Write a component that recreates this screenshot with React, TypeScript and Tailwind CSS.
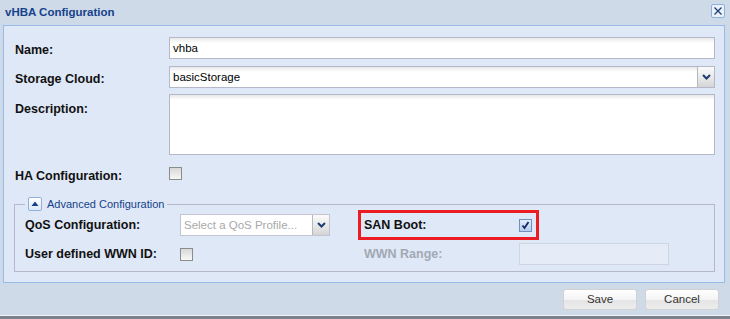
import React from 'react';

function Chevron() {
  return (
    <svg width="9" height="6" viewBox="0 0 9 6">
      <path d="M1 1 L4.5 4.5 L8 1" fill="none" stroke="#1d3d73" strokeWidth="2" />
    </svg>
  );
}

function Trigger() {
  return (
    <div className="w-[17px] h-full border-l border-[#b5b8c8] bg-[linear-gradient(#fbfbfb,#e6e6e6_60%,#d4d4d4)] flex items-center justify-center">
      <Chevron />
    </div>
  );
}

function Check({ checked }: { checked?: boolean }) {
  if (checked) {
    return (
      <span className="w-[13px] h-[13px] border border-[#6f8fbf] bg-[linear-gradient(#e3edfb,#b7cdec)] flex items-center justify-center">
        <svg width="9" height="9" viewBox="0 0 9 9">
          <path d="M1.5 4.5 L3.5 7 L7.5 1" fill="none" stroke="#12296b" strokeWidth="1.8" />
        </svg>
      </span>
    );
  }
  return <span className="w-[13px] h-[13px] border border-[#8c8c8c] bg-[linear-gradient(#d8d8d8,#f7f7f7)]" />;
}

const label = "text-[12.5px] font-bold text-[#111] leading-[16px]";

export default function App() {
  return (
    <div className="w-[730px] h-[319px] bg-[#cedae7] flex flex-col overflow-hidden font-['Liberation_Sans',Arial,sans-serif]">
      {/* header */}
      <div className="h-[25px] shrink-0 flex items-start justify-between pl-[5px] pr-[5px]">
        <span className="mt-[6px] text-[11.5px] font-bold text-[#15428b] leading-[13px]">vHBA Configuration</span>
        <button className="mt-[4px] w-[14px] h-[14px] border border-[#8fb0dd] rounded-[2px] bg-[#eaf1fb] flex items-center justify-center">
          <svg width="10" height="10" viewBox="0 0 10 10">
            <path d="M1.5 1.5 L8.5 8.5 M8.5 1.5 L1.5 8.5" stroke="#1d3d73" strokeWidth="1.3" />
          </svg>
        </button>
      </div>

      {/* body */}
      <div className="ml-[3px] w-[722px] h-[258px] shrink-0 border border-[#99bbe8] bg-[#dfe8f6] pl-[11px] pr-[9px] pt-[11px]">
        <div className="flex items-start">
          <div className={`w-[154px] pt-[5px] ${label}`}>Name:</div>
          <div className="flex-1 h-[22px] border border-[#b5b8c8] bg-[linear-gradient(#e8e8e8,#fff_5px)] pl-[3px] text-[11.5px] leading-[20px] text-black">vhba</div>
        </div>
        <div className="flex items-start mt-[7px]">
          <div className={`w-[154px] pt-[5px] ${label}`}>Storage Cloud:</div>
          <div className="flex-1 h-[22px] border border-[#b5b8c8] bg-[linear-gradient(#e8e8e8,#fff_5px)] flex">
            <div className="flex-1 pl-[3px] text-[11.5px] leading-[20px] text-black">basicStorage</div>
            <Trigger />
          </div>
        </div>
        <div className="flex items-start mt-[6px]">
          <div className={`w-[154px] pt-[7px] ${label}`}>Description:</div>
          <div className="flex-1 h-[61px] border border-[#b5b8c8] bg-[linear-gradient(#e8e8e8,#fff_5px)]" />
        </div>
        <div className="flex items-start mt-[12px]">
          <div className={`w-[154px] pt-[1px] ${label}`}>HA Configuration:</div>
          <Check />
        </div>

        <fieldset className="mt-[13px] -ml-[1px] border border-[#b5b8c8] px-[10px] pb-[6px]">
          <legend className="px-[3px]">
            <div className="flex items-center gap-[5px] h-[14px]">
              <span className="w-[14px] h-[14px] border border-[#8fb0dd] rounded-[2px] bg-[linear-gradient(#ffffff,#dde8f6)] flex items-center justify-center">
                <svg width="8" height="6" viewBox="0 0 8 6">
                  <path d="M4 0.5 L7.5 5 L0.5 5 Z" fill="#15428b" />
                </svg>
              </span>
              <span className="text-[11px] text-[#15428b] leading-[14px]">Advanced Configuration</span>
            </div>
          </legend>

          <div className="flex items-center h-[30px] -mt-[1px]">
            <div className={`w-[155px] ${label}`}>QoS Configuration:</div>
            <div className="w-[150px] h-[22px] border border-[#c3c6d2] bg-white flex">
              <div className="flex-1 pl-[3px] text-[11.5px] leading-[20px] text-[#a8a8a8]">Select a QoS Profile...</div>
              <Trigger />
            </div>
            <div className="ml-[28px] w-[181px] h-[30px] border-[3px] border-[#ec1c24] flex items-center">
              <div className={`w-[158px] pl-[3px] ${label}`}>SAN Boot:</div>
              <Check checked />
            </div>
          </div>

          <div className="flex items-center h-[22px] mt-[3px]">
            <div className={`w-[155px] ${label}`}>User defined WWN ID:</div>
            <div className="w-[150px] h-[22px] flex items-center">
              <Check />
            </div>
            <div className="ml-[28px] w-[161px] pl-[6px] text-[12.5px] font-bold text-[#a3a9b3] leading-[16px]">WWN Range:</div>
            <div className="w-[150px] h-[22px] border border-[#cdd5e0] bg-[#e5ecf7]" />
          </div>
        </fieldset>
      </div>

      {/* footer */}
      <div className="flex justify-end gap-[8px] pr-[11px] mt-[6px]">
        <button className="w-[74px] h-[21px] border border-[#d2d2d2] rounded-[3px] bg-[linear-gradient(#ffffff,#f4f4f4_50%,#e4e4e4_50%,#ececec)] text-[11.5px] text-[#333] leading-[19px]">Save</button>
        <button className="w-[74px] h-[21px] border border-[#d2d2d2] rounded-[3px] bg-[linear-gradient(#ffffff,#f4f4f4_50%,#e4e4e4_50%,#ececec)] text-[11.5px] text-[#333] leading-[19px]">Cancel</button>
      </div>

      <div className="mt-auto h-px bg-[#eef3f9]" />
      <div className="h-[3px] bg-[#7a818b]" />
    </div>
  );
}
